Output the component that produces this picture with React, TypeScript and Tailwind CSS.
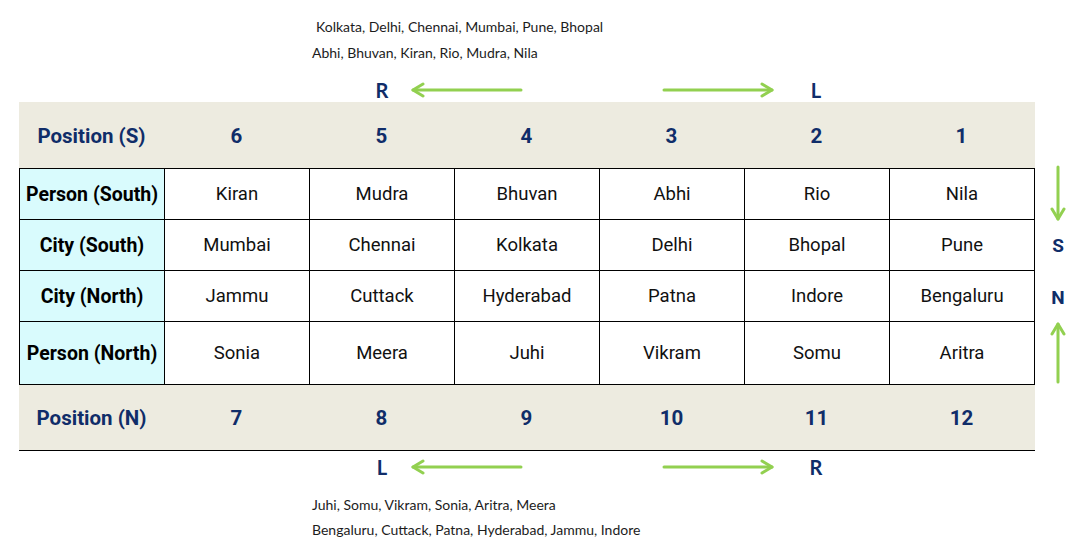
import React from 'react';

const NAVY = 'text-[#102d69]';

const positionsS = ['6', '5', '4', '3', '2', '1'];
const positionsN = ['7', '8', '9', '10', '11', '12'];

const rows = [
  { label: 'Person (South)', cells: ['Kiran', 'Mudra', 'Bhuvan', 'Abhi', 'Rio', 'Nila'], tall: false },
  { label: 'City (South)', cells: ['Mumbai', 'Chennai', 'Kolkata', 'Delhi', 'Bhopal', 'Pune'], tall: false },
  { label: 'City (North)', cells: ['Jammu', 'Cuttack', 'Hyderabad', 'Patna', 'Indore', 'Bengaluru'], tall: false },
  { label: 'Person (North)', cells: ['Sonia', 'Meera', 'Juhi', 'Vikram', 'Somu', 'Aritra'], tall: true },
];

function ArrowH({ dir }: { dir: 'left' | 'right' }) {
  // 114 x 16 box, line thickness 3
  return (
    <svg width="114" height="16" viewBox="0 0 114 16" fill="none" stroke="#92d050" strokeWidth="3" strokeLinecap="round" strokeLinejoin="round">
      <line x1="3" y1="8" x2="111" y2="8" />
      {dir === 'left' ? <polyline points="13,2 3,8 13,14" /> : <polyline points="101,2 111,8 101,14" />}
    </svg>
  );
}

function ArrowV({ dir, h }: { dir: 'up' | 'down'; h: number }) {
  return (
    <svg width="16" height={h} viewBox={`0 0 16 ${h}`} fill="none" stroke="#92d050" strokeWidth="3" strokeLinecap="round" strokeLinejoin="round">
      <line x1="8" y1="2" x2="8" y2={h - 2} />
      {dir === 'down' ? (
        <polyline points={`2,${h - 12} 8,${h - 2} 14,${h - 12}`} />
      ) : (
        <polyline points="2,12 8,2 14,12" />
      )}
    </svg>
  );
}

function ArrowRow({ left, right }: { left: string; right: string }) {
  return (
    <div className="flex items-center h-[24px] font-['Lato',sans-serif] font-bold text-[20px]">
      <span className={`ml-[375px] w-[14px] text-center ${NAVY}`}>{left}</span>
      <div className="ml-[21px]">
        <ArrowH dir="left" />
      </div>
      <div className="ml-[137px]">
        <ArrowH dir="right" />
      </div>
      <span className={`ml-[34px] w-[14px] text-center ${NAVY}`}>{right}</span>
    </div>
  );
}

function Band({ title, nums, bottomLine }: { title: string; nums: string[]; bottomLine?: boolean }) {
  return (
    <div className="pl-[19px]">
      <div className={`flex w-[1016px] h-[66px] pt-[2px] bg-[#edebe0] items-center ${bottomLine ? 'border-b border-black' : ''}`}>
        <div className={`w-[145px] text-center font-bold text-[20.5px] ${NAVY}`}>{title}</div>
        {nums.map((n) => (
          <div key={n} className={`w-[145px] text-center font-bold text-[20.5px] ${NAVY}`}>{n}</div>
        ))}
      </div>
    </div>
  );
}

export default function App() {
  return (
    <div className="w-[1081px] h-[551px] bg-white overflow-hidden font-['Roboto',sans-serif]">
      {/* notes on top */}
      <div className="pt-[14px] pl-[312px] font-['Lato',sans-serif] text-[14px] leading-[26px] text-[#1c1c1c]">
        <div className="ml-[4px]">Kolkata, Delhi, Chennai, Mumbai, Pune, Bhopal</div>
        <div>Abhi, Bhuvan, Kiran, Rio, Mudra, Nila</div>
      </div>
      <div className="mt-[12px]">
        <ArrowRow left="R" right="L" />
      </div>

      <Band title="Position (S)" nums={positionsS} />

      <div className="flex">
        <div className="pl-[19px]">
          <div className="w-[1016px] border-t border-l border-black">
            {rows.map((r) => (
              <div key={r.label} className={`flex ${r.tall ? 'h-[63px]' : 'h-[51px]'}`}>
                <div className="w-[145px] flex items-center justify-center pt-[2px] bg-[#d9fbfd] border-r border-b border-black font-bold text-[19.5px] text-black">
                  {r.label}
                </div>
                {r.cells.map((c) => (
                  <div key={c} className="w-[145px] flex items-center justify-center pt-[2px] border-r border-b border-black text-[18.5px] text-[#111]">
                    {c}
                  </div>
                ))}
              </div>
            ))}
          </div>
        </div>
        <div className="w-[46px] flex flex-col items-center">
          <div className="-mt-[3px]">
            <ArrowV dir="down" h={56} />
          </div>
          <div className={`mt-[13px] h-[24px] leading-[24px] font-bold text-[19px] ${NAVY}`}>S</div>
          <div className={`mt-[28px] h-[24px] leading-[24px] font-bold text-[19px] ${NAVY}`}>N</div>
          <div className="mt-[12px]">
            <ArrowV dir="up" h={62} />
          </div>
        </div>
      </div>

      <Band title="Position (N)" nums={positionsN} bottomLine />

      <div className="mt-[4px]">
        <ArrowRow left="L" right="R" />
      </div>
      <div className="mt-[13px] pl-[312px] font-['Lato',sans-serif] text-[14px] leading-[25px] text-[#1c1c1c]">
        <div>Juhi, Somu, Vikram, Sonia, Aritra, Meera</div>
        <div>Bengaluru, Cuttack, Patna, Hyderabad, Jammu, Indore</div>
      </div>
    </div>
  );
}
